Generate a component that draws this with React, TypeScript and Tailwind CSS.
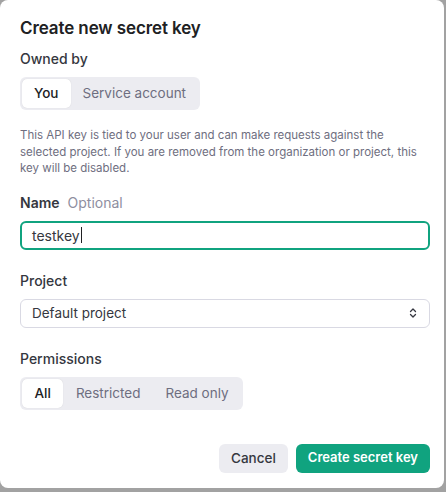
import React from "react";

function ChevronUpDown() {
  return (
    <svg width="10" height="12" viewBox="0 0 10 12" fill="none" stroke="#353740" strokeWidth="1.3" strokeLinecap="round" strokeLinejoin="round">
      <path d="M2.5 4.5 L5 2 L7.5 4.5" />
      <path d="M2.5 7.5 L5 10 L7.5 7.5" />
    </svg>
  );
}

export default function App() {
  return (
    <div className="w-[446px] h-[492px] bg-[#a2a2a2] overflow-hidden" style={{ fontFamily: "Inter, 'Noto Sans', sans-serif" }}>
      <div className="w-[444px] h-[488px] bg-white rounded-[8px] pl-5 pr-[14px] flex flex-col text-[#202123]">
        <h1 className="mt-[17px] text-[17px] leading-[22px] font-semibold tracking-[-0.1px]">Create new secret key</h1>
        <div className="mt-[11px] text-[14px] leading-[18px] font-medium text-[#353740]">Owned by</div>
        <div className="mt-[9px] flex w-fit items-center bg-[#ececf1] rounded-[6px] p-[2px] h-[33px]">
          <div className="h-[29px] px-[12px] flex items-center bg-white rounded-[5px] text-[13.5px] font-medium text-[#202123] shadow-[0_0_1px_rgba(0,0,0,0.15)]">You</div>
          <div className="h-[29px] px-[12px] flex items-center text-[13.5px] text-[#6e6e80]">Service account</div>
        </div>
        <p className="mt-[17px] w-[400px] text-[11.5px] leading-[16.5px] text-[#6e6e80]">
          This API key is tied to your user and can make requests against the selected project. If you are removed from the organization or project, this key will be disabled.
        </p>
        <div className="mt-[17px] flex items-baseline gap-[8px] text-[14px] leading-[18px]">
          <span className="font-semibold text-[#353740]">Name</span>
          <span className="text-[#8e8ea0]">Optional</span>
        </div>
        <div className="mt-[9px] h-[29px] w-[410px] border-2 border-[#10a37f] rounded-[6px] flex items-center px-[10px] text-[14px] text-[#353740]">
          testkey<span className="inline-block w-px h-[16px] bg-[#202123] ml-[1px]"></span>
        </div>
        <div className="mt-[22px] text-[14px] leading-[18px] font-medium text-[#353740]">Project</div>
        <div className="mt-[9px] h-[29px] w-[410px] border border-[#d9d9e3] rounded-[6px] flex items-center justify-between pl-[11px] pr-[11px] text-[13.5px] text-[#353740]">
          <span>Default project</span>
          <ChevronUpDown />
        </div>
        <div className="mt-[22px] text-[14px] leading-[18px] font-medium text-[#353740]">Permissions</div>
        <div className="mt-[9px] flex w-fit items-center bg-[#ececf1] rounded-[6px] p-[2px] h-[33px]">
          <div className="h-[29px] px-[12.5px] flex items-center bg-white rounded-[5px] text-[13.5px] font-medium text-[#202123] shadow-[0_0_1px_rgba(0,0,0,0.15)]">All</div>
          <div className="h-[29px] px-[12.5px] flex items-center text-[13.5px] text-[#6e6e80]">Restricted</div>
          <div className="h-[29px] px-[12.5px] flex items-center text-[13.5px] text-[#6e6e80]">Read only</div>
        </div>
        <div className="mt-[34px] flex justify-end gap-[8px]">
          <button className="h-[29px] px-[12px] rounded-[6px] bg-[#ececf1] text-[13.5px] font-medium text-[#353740]">Cancel</button>
          <button className="h-[29px] px-[12px] rounded-[6px] bg-[#10a37f] text-[13px] font-semibold text-white">Create secret key</button>
        </div>
      </div>
    </div>
  );
}
